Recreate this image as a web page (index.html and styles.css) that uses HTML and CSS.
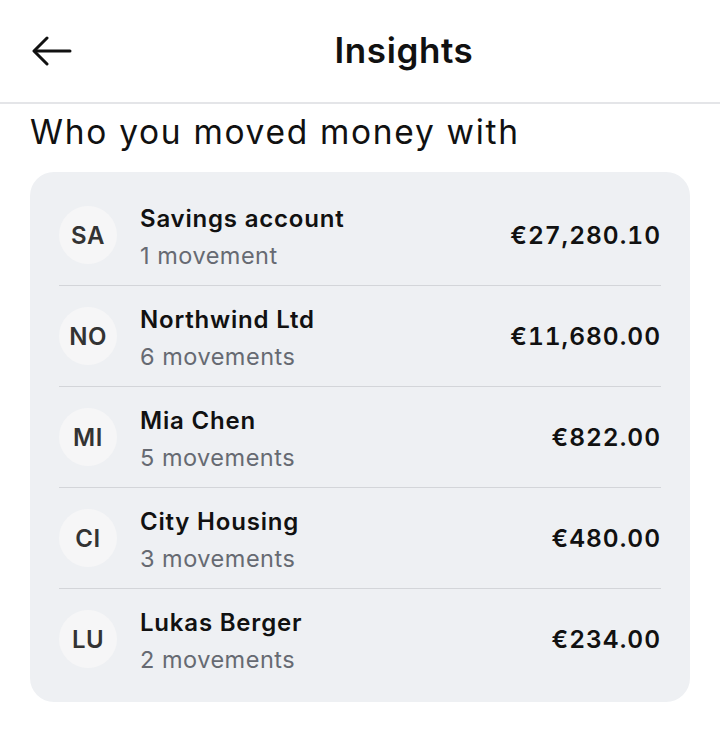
FILE: index.html
```html
<!DOCTYPE html>
<html lang="en">
<head>
  <meta charset="UTF-8" />
  <meta name="viewport" content="width=device-width, initial-scale=1.0"/>
  <title>Insights</title>
  <link rel="stylesheet" href="styles.css">
</head>
<body>
  <header class="topbar">
    <button class="back" aria-label="Back">
      <svg width="40" height="30" viewBox="0 0 40 30" fill="none" stroke="#111" stroke-width="3" stroke-linecap="round" stroke-linejoin="round">
        <path d="M38 15H3"/>
        <path d="M15 2L2 15l13 13"/>
      </svg>
    </button>
    <h1>Insights</h1>
  </header>

  <main class="content">
    <h2>Who you moved money with</h2>
    <div class="card">
      <div class="row">
        <div class="avatar">SA</div>
        <div class="info">
          <div class="name">Savings account</div>
          <div class="count">1 movement</div>
        </div>
        <div class="amount">€27,280.10</div>
      </div>
      <div class="row">
        <div class="avatar">NO</div>
        <div class="info">
          <div class="name">Northwind Ltd</div>
          <div class="count">6 movements</div>
        </div>
        <div class="amount">€11,680.00</div>
      </div>
      <div class="row">
        <div class="avatar">MI</div>
        <div class="info">
          <div class="name">Mia Chen</div>
          <div class="count">5 movements</div>
        </div>
        <div class="amount">€822.00</div>
      </div>
      <div class="row">
        <div class="avatar">CI</div>
        <div class="info">
          <div class="name">City Housing</div>
          <div class="count">3 movements</div>
        </div>
        <div class="amount">€480.00</div>
      </div>
      <div class="row">
        <div class="avatar">LU</div>
        <div class="info">
          <div class="name">Lukas Berger</div>
          <div class="count">2 movements</div>
        </div>
        <div class="amount">€234.00</div>
      </div>
    </div>
  </main>
</body>
</html>
```

FILE: styles.css
```css
body {
  font-family: Inter, "Noto Sans", sans-serif;
  margin: 0;
  padding: 0;
  background: #fff;
  color: #111;
}
.topbar {
  display: flex;
  align-items: center;
  height: 102px;
  border-bottom: 2px solid #e4e5e8;
}
.back {
  width: 88px;
  height: 102px;
  padding: 0 0 0 32px;
  border: none;
  background: none;
  display: flex;
  align-items: center;
}
.topbar h1 {
  flex: 1;
  margin: 0;
  text-align: center;
  font-size: 35px;
  font-weight: 600;
  letter-spacing: 0.6px;
  padding-bottom: 2px;
}
.content {
  padding: 0 30px;
}
.content h2 {
  margin: 8px 0 20px;
  font-size: 33.5px;
  font-weight: 400;
  letter-spacing: 1.7px;
  line-height: 40px;
}
.card {
  background: #eef0f3;
  border-radius: 24px;
  padding: 13px 29px;
}
.row {
  display: flex;
  align-items: center;
  height: 100px;
  border-bottom: 1px solid #d3d5d9;
}
.row:last-child {
  border-bottom: none;
}
.avatar {
  width: 58px;
  height: 58px;
  border-radius: 50%;
  background: #f6f6f7;
  display: flex;
  align-items: center;
  justify-content: center;
  font-size: 24px;
  font-weight: 600;
  letter-spacing: 0.5px;
  color: #333;
  margin-right: 23px;
}
.info {
  flex: 1;
  padding-top: 6px;
}
.name {
  font-size: 24px;
  font-weight: 600;
  letter-spacing: 0.8px;
  line-height: 36px;
}
.count {
  font-size: 23.5px;
  color: #666a72;
  letter-spacing: 0.5px;
  line-height: 38px;
}
.amount {
  font-size: 24.5px;
  font-weight: 600;
  font-variant-numeric: tabular-nums;
  letter-spacing: 1px;
}
```
